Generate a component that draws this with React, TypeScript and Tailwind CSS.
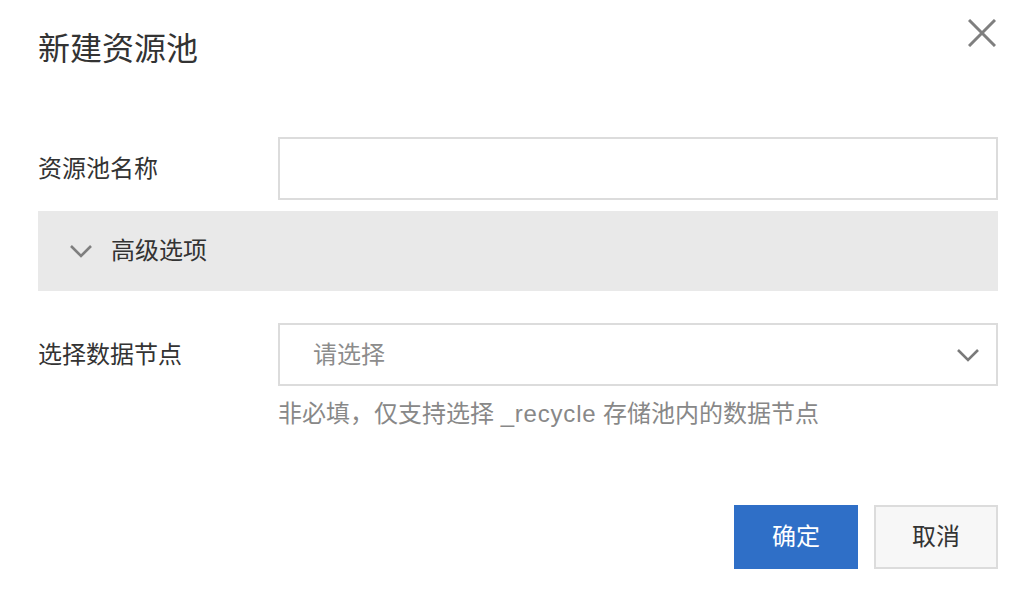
import { useState } from 'react';

const font = { fontFamily: '"Liberation Sans", "Noto Sans CJK SC", sans-serif' };

function Chevron({ className }: { className?: string }) {
    return (
        <svg viewBox="0 0 24 14" width="24" height="14" className={className} fill="none">
            <path d="M2 2 L12 12 L22 2" stroke="currentColor" strokeWidth="2.6" />
        </svg>
    );
}

export default function App() {
    const [name, setName] = useState('');
    const [open, setOpen] = useState(false);

    return (
        <div className="w-[1036px] h-[590px] bg-white px-[38px] text-[#333]" style={font}>
            <div className="flex justify-between items-start">
                <h1 className="mt-[33px] text-[32px] leading-[32px] font-normal">新建资源池</h1>
                <button className="mt-[19px] mr-[2px] text-[#7f7f7f]">
                    <svg viewBox="0 0 28 28" width="28" height="28" fill="none">
                        <path d="M1 1 L27 27 M27 1 L1 27" stroke="currentColor" strokeWidth="3" />
                    </svg>
                </button>
            </div>

            <div className="mt-[72px] flex items-center">
                <label className="w-[240px] text-[24px] leading-[24px]">资源池名称</label>
                <input
                    value={name}
                    onChange={(e) => setName(e.target.value)}
                    className="flex-1 h-[63px] border-2 border-[#dcdcdc] px-[33px] text-[24px] outline-none"
                />
            </div>

            <button
                onClick={() => setOpen(!open)}
                className="mt-[11px] w-full h-[80px] bg-[#e9e9e9] flex items-center pl-[31px] gap-[18px]"
            >
                <Chevron className="text-[#7f7f7f]" />
                <span className="text-[24px] leading-[24px]">高级选项</span>
            </button>

            <div className="mt-[32px] flex items-start">
                <label className="w-[240px] text-[24px] leading-[63px]">选择数据节点</label>
                <div className="flex-1">
                    <div className="h-[63px] border-2 border-[#dcdcdc] flex items-center justify-between pl-[33px] pr-[16px]">
                        <span className="text-[24px] leading-[24px] text-[#8c8c8c]">请选择</span>
                        <Chevron className="text-[#7a7a7a]" />
                    </div>
                    <p className="mt-[16px] text-[24px] leading-[24px] text-[#888]">
                        非必填，仅支持选择 <span className="tracking-[0.8px]">_recycle</span> 存储池内的数据节点
                    </p>
                </div>
            </div>

            <div className="mt-[79px] flex justify-end gap-[16px]">
                <button className="w-[124px] h-[64px] bg-[#2f6fc7] text-white text-[24px]">确定</button>
                <button className="w-[124px] h-[64px] bg-[#f7f7f7] border-2 border-[#dcdcdc] text-[#333] text-[24px]">
                    取消
                </button>
            </div>
        </div>
    );
}
